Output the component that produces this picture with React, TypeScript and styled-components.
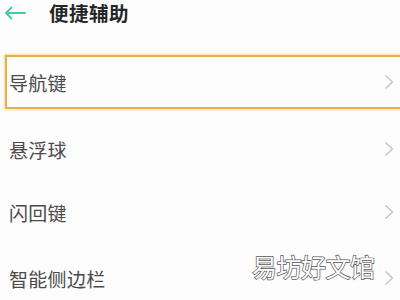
import React from "react";
import styled, { createGlobalStyle } from "styled-components";

const Global = createGlobalStyle`
  html, body { margin: 0; padding: 0; background: #fff; }
  body { width: 400px; height: 300px; overflow: hidden; font-family: "Noto Sans CJK SC", "Noto Sans", sans-serif; }
`;

const Page = styled.div`
  position: relative;
  width: 400px;
  height: 300px;
  overflow: hidden;
  background: #fdfdfd;
`;

const Header = styled.div`
  display: flex;
  align-items: center;
  height: 24px;
  padding-left: 4px;
  padding-top: 1px;
  gap: 23px;
`;

const Title = styled.div`
  font-size: 19.5px;
  font-weight: 700;
  color: #262626;
  letter-spacing: 0.5px;
  line-height: 1;
`;

const List = styled.div`
  display: flex;
  flex-direction: column;
  margin-top: 30px;
`;

const Row = styled.div<{ $focused?: boolean; $h: number }>`
  display: flex;
  align-items: center;
  justify-content: space-between;
  height: ${(p) => p.$h}px;
  margin-left: 5px;
  padding-left: 2px;
  padding-right: 6px;
  box-sizing: border-box;
  border: 2px solid ${(p) => (p.$focused ? "#e6ae4c" : "transparent")};
  border-right: none;
  box-shadow: ${(p) => (p.$focused ? "0 0 2px 1px rgba(240,200,120,0.6)" : "none")};
`;

const Label = styled.span`
  font-size: 19px;
  color: #4a4a4a;
  line-height: 1;
  letter-spacing: 0.3px;
`;

const Watermark = styled.div`
  position: absolute;
  left: 252px;
  top: 254px;
  font-size: 25px;
  font-weight: 400;
  color: #fff;
  -webkit-text-stroke: 1.4px #555;
  paint-order: stroke fill;
  letter-spacing: -0.5px;
  line-height: 1;
`;

const Chevron = () => (
  <svg width="10" height="16" viewBox="0 0 10 16">
    <path d="M1.5 1.5 L8.5 8 L1.5 14.5" fill="none" stroke="#c4c4c4" strokeWidth="1.4" />
  </svg>
);

const BackArrow = () => (
  <svg width="22" height="14" viewBox="0 0 22 14">
    <path d="M21 7 H2 M7.5 1.5 L2 7 L7.5 12.5" fill="none" stroke="#46c9a2" strokeWidth="1.8" strokeLinecap="round" strokeLinejoin="round" />
  </svg>
);

const items: { label: string; focused?: boolean; h: number }[] = [
  { label: "导航键", focused: true, h: 54 },
  { label: "悬浮球", h: 80 },
  { label: "闪回键", h: 46 },
  { label: "智能侧边栏", h: 86 },
];

export default function App() {
  return (
    <>
      <Global />
      <Page>
        <Header>
          <BackArrow />
          <Title>便捷辅助</Title>
        </Header>
        <List>
          {items.map((it) => (
            <Row key={it.label} $focused={it.focused} $h={it.h}>
              <Label>{it.label}</Label>
              <Chevron />
            </Row>
          ))}
        </List>
        <Watermark>易坊好文馆</Watermark>
      </Page>
    </>
  );
}
